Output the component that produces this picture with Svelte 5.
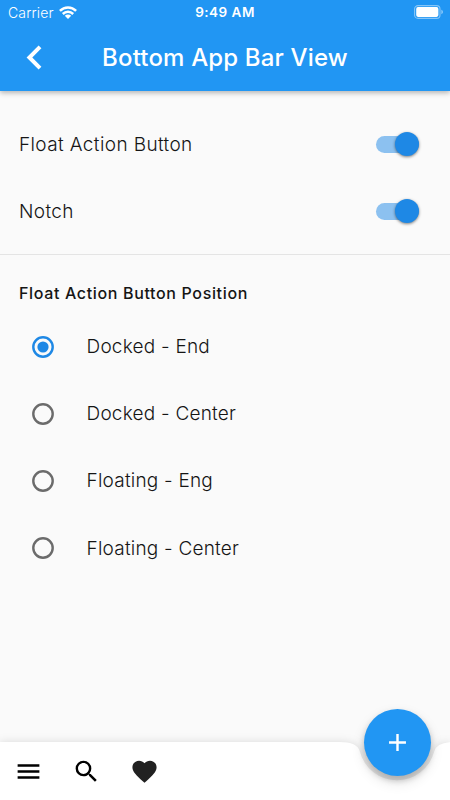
<script lang="ts">
  let switches = $state([
    { label: 'Float Action Button', on: true },
    { label: 'Notch', on: true },
  ]);
  const positions = ['Docked - End', 'Docked - Center', 'Floating - Eng', 'Floating - Center'];
  let selected = $state('Docked - End');
</script>

<div class="screen">
  <header class="app-bar">
    <div class="status">
      <div class="carrier">
        <span>Carrier</span>
        <svg width="18" height="13" viewBox="0 0 18 13" fill="none" stroke="#fff" stroke-width="2.5">
          <path d="M.9 4.9C5.5.2 12.5.2 17.1 4.9" />
          <path d="M3.8 8c3-2.9 7.4-2.9 10.4 0" />
          <path d="M9 12.9 5.8 9.8c1.8-1.6 4.6-1.6 6.4 0z" fill="#fff" stroke="none" />
        </svg>
      </div>
      <span class="time">9:49 AM</span>
      <svg class="battery" width="30" height="14" viewBox="0 0 30 14">
        <rect x=".6" y=".6" width="25.4" height="12.8" rx="3.4" fill="none" stroke="#fff" stroke-opacity=".45" stroke-width="1.1" />
        <rect x="2.2" y="2.1" width="22.2" height="9.8" rx="1.8" fill="#fff" />
        <path d="M27.4 4.8c2 .7 2 3.7 0 4.4z" fill="#fff" fill-opacity=".5" />
      </svg>
    </div>
    <div class="title-row">
      <button class="back" aria-label="Back">
        <svg width="16" height="25" viewBox="0 0 16 25" fill="none" stroke="#fff" stroke-width="4">
          <path d="M14 1.9 3.4 12.5 14 23.1" />
        </svg>
      </button>
      <h1>Bottom App Bar View</h1>
    </div>
  </header>

  <main>
    <section class="switches">
      {#each switches as item}
        <label class="switch-row">
          <span>{item.label}</span>
          <input type="checkbox" bind:checked={item.on} />
          <span class="track"><span class="thumb"></span></span>
        </label>
      {/each}
    </section>

    <section class="positions">
      <h2>Float Action Button Position</h2>
      {#each positions as position}
        <label class="radio-row">
          <input type="radio" name="position" value={position} bind:group={selected} />
          <svg class="dot" width="22" height="22" viewBox="0 0 22 22">
            <circle class="ring" cx="11" cy="11" r="9.7" />
            <circle class="center" cx="11" cy="11" r="5.6" />
          </svg>
          <span>{position}</span>
        </label>
      {/each}
    </section>
  </main>

  <footer class="bottom-bar">
    <svg class="surface" width="450" height="88" viewBox="0 0 450 88">
      <path
        d="M-20 30H339.4Q357.4 30 359.8 39.4A38.4 38.4 0 0 0 434.2 39.4Q436.6 30 454.6 30H470V120H-20Z"
        fill="#fff"
      />
    </svg>
    <button aria-label="Menu">
      <svg width="29" height="29" viewBox="0 0 24 24"><path d="M3 18h18v-2H3v2zm0-5h18v-2H3v2zm0-7v2h18V6H3z" /></svg>
    </button>
    <button aria-label="Search">
      <svg width="29" height="29" viewBox="0 0 24 24">
        <path d="M15.5 14h-.79l-.28-.27A6.47 6.47 0 0 0 16 9.5 6.5 6.5 0 1 0 9.5 16c1.61 0 3.09-.59 4.23-1.57l.27.28v.79l5 4.99L20.49 19l-4.99-5zm-6 0C7.01 14 5 11.99 5 9.5S7.01 5 9.5 5 14 7.01 14 9.5 11.99 14 9.5 14z" />
      </svg>
    </button>
    <button aria-label="Favorite">
      <svg class="heart" width="29" height="29" viewBox="0 0 24 24">
        <path d="M12 21.35l-1.45-1.32C5.4 15.36 2 12.28 2 8.5 2 5.42 4.42 3 7.5 3c1.74 0 3.41.81 4.5 2.09C13.09 3.81 14.76 3 16.5 3 19.58 3 22 5.42 22 8.5c0 3.78-3.4 6.86-8.55 11.54L12 21.35z" />
      </svg>
    </button>
    <button class="fab" aria-label="Add">
      <svg width="29" height="29" viewBox="0 0 24 24"><path d="M19 13h-6v6h-2v-6H5v-2h6V5h2v6h6v2z" /></svg>
    </button>
  </footer>
</div>

<style>
  .screen {
    display: flex;
    flex-direction: column;
    width: 450px;
    height: 800px;
    overflow: hidden;
    background: #fafafa;
    color: #151515;
    font-family: Inter, sans-serif;
  }

  button {
    display: flex;
    padding: 0;
    border: 0;
    background: none;
  }

  input {
    position: absolute;
    opacity: 0;
    pointer-events: none;
  }

  .app-bar {
    flex: none;
    height: 91px;
    background: #2196f3;
    color: #fff;
    box-shadow: 0 2px 5px rgba(0, 0, 0, 0.28);
  }

  .status {
    display: grid;
    grid-template-columns: 1fr auto 1fr;
    align-items: center;
    height: 24px;
    padding: 0 6px 0 8px;
    font-size: 14px;
  }

  .carrier {
    display: flex;
    align-items: center;
    gap: 5.5px;
    font-weight: 350;
    letter-spacing: 0.15px;
  }

  .time {
    margin-right: 2px;
    font-size: 13.5px;
    font-weight: 600;
    letter-spacing: 0.5px;
  }

  .battery {
    justify-self: end;
  }

  .title-row {
    display: grid;
    grid-template-columns: 67px 1fr 67px;
    align-items: center;
    height: 67px;
  }

  .back {
    justify-self: center;
  }

  h1 {
    margin: 0;
    font-size: 24px;
    font-weight: 500;
    letter-spacing: 0.16px;
    text-align: center;
    white-space: nowrap;
  }

  .switches {
    padding: 19.6px 19px 9px;
    border-bottom: 1px solid #e4e4e4;
  }

  .switch-row,
  .radio-row {
    display: flex;
    align-items: center;
    height: 67.2px;
    font-size: 19px;
    font-weight: 350;
  }

  .switch-row {
    justify-content: space-between;
    padding-right: 12px;
    letter-spacing: 0.38px;
  }

  .track {
    display: flex;
    align-items: center;
    width: 43px;
    height: 17px;
    border-radius: 9px;
    background: #bdbdbd;
  }

  .thumb {
    width: 24px;
    height: 24px;
    border-radius: 50%;
    background: #fff;
    box-shadow: 0 1px 3px rgba(0, 0, 0, 0.5);
  }

  input:checked + .track {
    justify-content: flex-end;
    background: #8cc1f0;
  }

  input:checked + .track .thumb {
    background: #1e88e5;
  }

  .positions {
    padding: 29px 19px 0;
  }

  h2 {
    margin: 0 0 11px;
    font-size: 16px;
    font-weight: 500;
    line-height: 18px;
    letter-spacing: 0.65px;
  }

  .radio-row {
    gap: 32.5px;
    padding-left: 13px;
    letter-spacing: 0.22px;
  }

  .ring {
    fill: none;
    stroke: #6b6b6b;
    stroke-width: 2.4;
  }

  .center {
    fill: none;
  }

  input:checked + .dot .ring {
    stroke: #1e88e5;
  }

  input:checked + .dot .center {
    fill: #1e88e5;
  }

  .bottom-bar {
    position: relative;
    display: flex;
    align-items: center;
    gap: 28.8px;
    box-sizing: border-box;
    height: 58px;
    margin-top: auto;
    padding-left: 14px;
  }

  .bottom-bar button {
    position: relative;
  }

  .surface {
    position: absolute;
    left: 0;
    bottom: 0;
    filter: drop-shadow(0 0 4px rgba(0, 0, 0, 0.13));
  }

  .heart {
    fill: #212121;
  }

  .bottom-bar .fab {
    position: absolute;
    top: -33px;
    right: 19.5px;
    align-items: center;
    justify-content: center;
    width: 67px;
    height: 67px;
    border-radius: 50%;
    background: #2196f3;
    fill: #fff;
    box-shadow: 0 4px 6px rgba(0, 0, 0, 0.22), 0 6px 14px rgba(0, 0, 0, 0.12);
  }
</style>
